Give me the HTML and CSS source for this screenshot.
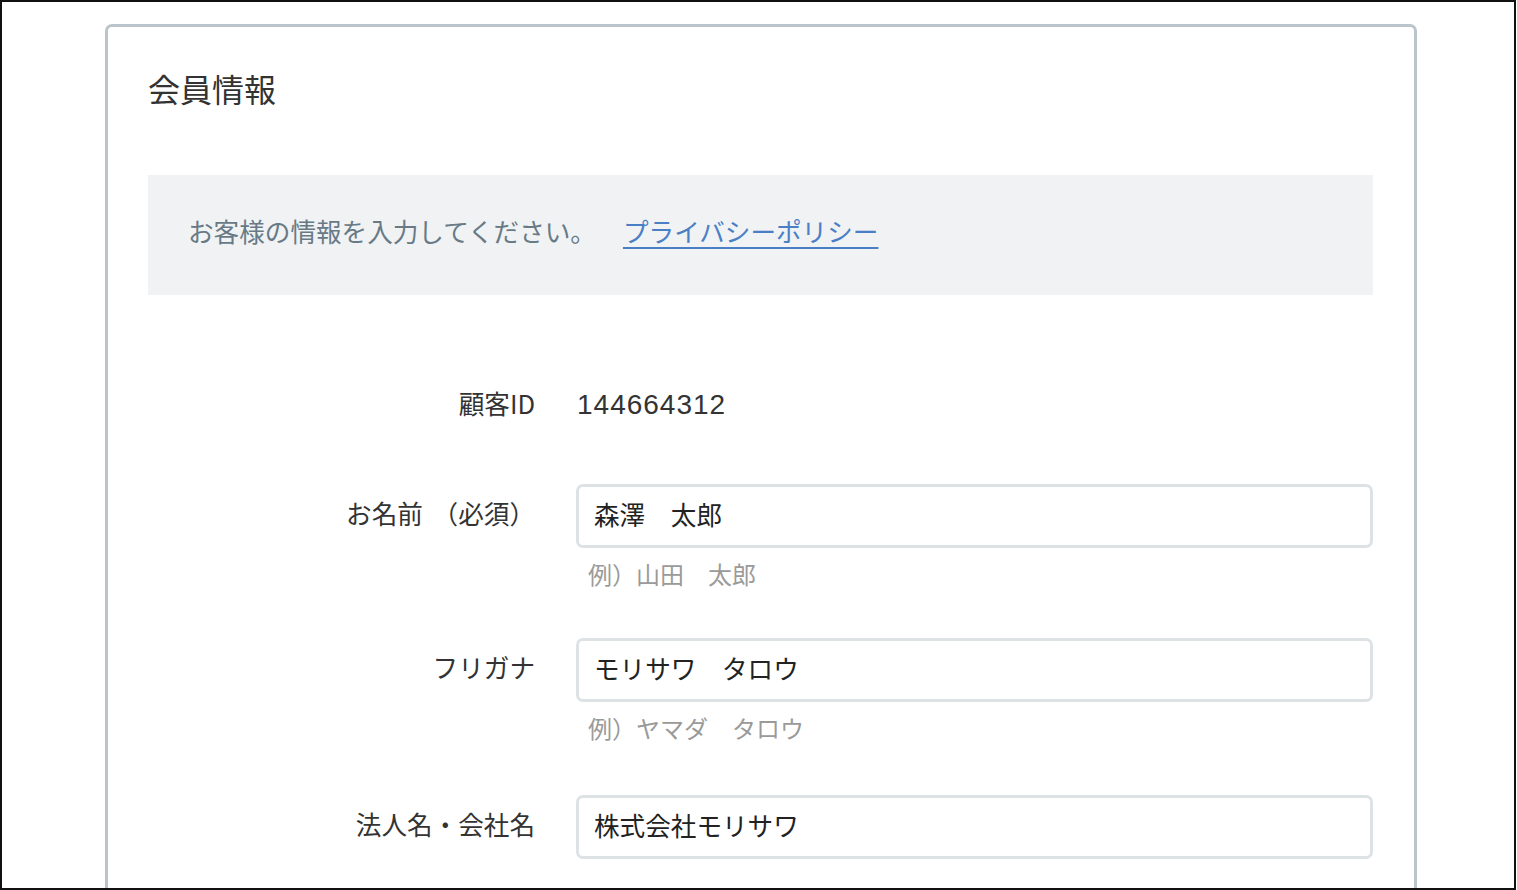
FILE: index.html
```html
<html>
    <head>
        <meta charset="utf-8">
        <link rel="stylesheet" href="styles.css">
    </head>

    <body>
        <div class="frame">
            <div class="card">
                <h1 class="card-title">会員情報</h1>

                <div class="notice">
                    <span>お客様の情報を入力してください。</span>
                    <a href="#" class="notice-link">プライバシーポリシー</a>
                </div>

                <form class="member-form">
                    <div class="form-row">
                        <label class="form-label">顧客ID</label>
                        <div class="form-value">144664312</div>
                    </div>

                    <div class="form-row">
                        <label class="form-label" for="name">お名前 <span class="required">（必須）</span></label>
                        <div class="form-field">
                            <input type="text" id="name" class="text-input" value="森澤　太郎">
                            <div class="hint">例）山田　太郎</div>
                        </div>
                    </div>

                    <div class="form-row">
                        <label class="form-label" for="kana">フリガナ</label>
                        <div class="form-field">
                            <input type="text" id="kana" class="text-input" value="モリサワ　タロウ">
                            <div class="hint">例）ヤマダ　タロウ</div>
                        </div>
                    </div>

                    <div class="form-row last">
                        <label class="form-label" for="company">法人名・会社名</label>
                        <div class="form-field">
                            <input type="text" id="company" class="text-input" value="株式会社モリサワ">
                        </div>
                    </div>
                </form>
            </div>
        </div>
    </body>
</html>
```

FILE: styles.css
```css
html, body {
    margin: 0;
    padding: 0;
    background-color: #fff;
}
body {
    font-family: "Noto Sans CJK JP", "Noto Sans", sans-serif;
    color: #333;
}
        .frame {
            box-sizing: border-box;
            width: 1516px;
            height: 890px;
            border: 2px solid #111;
            overflow: hidden;
        }
        .card {
            width: 1312px;
            box-sizing: border-box;
            margin: 22px 0 0 103px;
            border: 3px solid #b9c4cb;
            border-radius: 7px;
            padding: 39px 41px 60px 40px;
            min-height: 1000px;
        }
        .card-title {
            margin: 0;
            font-size: 32px;
            font-weight: normal;
            line-height: 45px;
            color: #333;
        }
        .notice {
            margin-top: 64px;
            height: 120px;
            box-sizing: border-box;
            padding: 0 40px 10px 40px;
            background-color: #f0f2f4;
            display: flex;
            align-items: center;
            font-size: 25.6px;
            color: #687a86;
        }
        .notice-link {
            margin-left: 27px;
            color: #4a7fc6;
            text-decoration: underline;
            text-decoration-thickness: 2px;
            text-underline-offset: 5px;
        }
        .member-form {
            margin-top: 79px;
            display: flex;
            flex-direction: column;
            gap: 46px;
        }
        .form-row {
            display: grid;
            grid-template-columns: 387px 797px;
            column-gap: 41px;
            align-items: start;
        }
        .form-row.last {
            margin-top: 3px;
        }
        .form-label {
            text-align: right;
            font-size: 25.6px;
            line-height: 58px;
            padding-bottom: 6px;
            color: #333;
        }
        .required {
            margin-left: 4px;
        }
        .form-value {
            font-family: "Liberation Sans", "Noto Sans CJK JP", sans-serif;
            font-size: 28px;
            line-height: 62px;
            padding-bottom: 2px;
            letter-spacing: 1px;
            color: #333;
            padding-left: 1px;
        }
        .text-input {
            display: block;
            box-sizing: border-box;
            width: 100%;
            height: 64px;
            border: 3px solid #dde2e5;
            border-radius: 7px;
            padding: 0 15px 6px 15px;
            font-family: "Noto Sans CJK JP", "Noto Sans", sans-serif;
            font-size: 25.6px;
            color: #222;
            background-color: #fff;
            outline: none;
        }
        .hint {
            margin-top: 8px;
            padding-left: 12px;
            font-size: 24px;
            line-height: 36px;
            color: #9a9a9a;
        }
```
